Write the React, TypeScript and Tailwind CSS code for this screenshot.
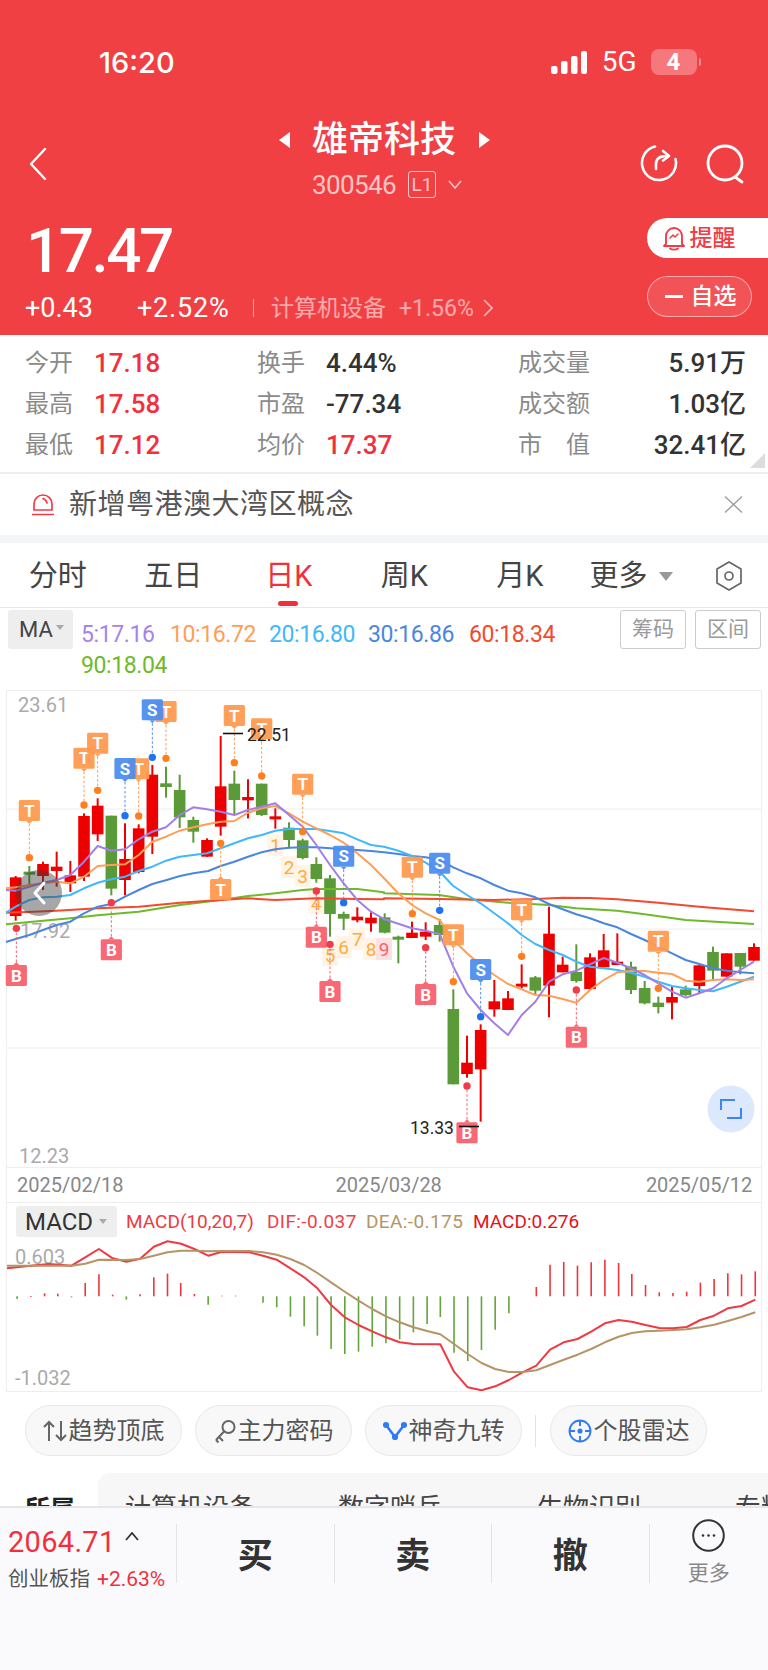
import React from "react";

type Pt = [number, number];
const z3 = (p: number[][]): Pt[] => p.map(([x, y]) => [x / 3, 680 + y / 3]);
const z4 = (p: number[][]): Pt[] => p.map(([x, y]) => [384 + x / 3, 780 + y / 3]);
const line = (p: Pt[]) => p.map(([x, y]) => `${x.toFixed(1)},${y.toFixed(1)}`).join(" ");

const RED = "#ee0000";
const GREEN = "#5a9a38";

// [cx, wickTop, wickBottom, bodyTop, bodyBottom, red?]
const candles3: number[][] = [
  [47, 588, 722, 592, 708, 1], [88, 558, 615, 575, 582, 0], [129, 545, 630, 552, 588, 1], [170, 515, 620, 560, 573, 1],
  [211, 543, 636, 586, 610, 1], [252, 400, 603, 408, 590, 1], [293, 355, 483, 377, 463, 1], [334, 407, 646, 407, 626, 0],
  [375, 430, 646, 537, 600, 1], [416, 433, 580, 445, 576, 1], [457, 255, 522, 284, 470, 1], [498, 260, 353, 310, 321, 0],
  [539, 284, 444, 330, 412, 0], [580, 410, 488, 420, 455, 0], [621, 475, 530, 480, 530, 1], [662, 168, 467, 319, 440, 1],
  [703, 272, 403, 311, 360, 0], [744, 298, 415, 351, 361, 1], [785, 311, 408, 311, 405, 0], [826, 385, 446, 409, 414, 1],
  [867, 427, 505, 443, 480, 0], [908, 476, 538, 481, 534, 0], [949, 532, 608, 552, 597, 0], [990, 585, 770, 595, 702, 0],
  [1031, 695, 750, 702, 716, 0], [1072, 682, 727, 710, 721, 1], [1113, 697, 755, 713, 730, 1],
];
const candles4: number[][] = [
  [2, 400, 460, 412, 458, 0], [43, 467, 550, 470, 478, 0], [84, 425, 474, 458, 474, 1], [125, 427, 480, 455, 470, 1],
  [167, 417, 485, 435, 465, 0], [208, 628, 913, 687, 913, 0], [249, 767, 893, 848, 882, 1], [290, 733, 1025, 750, 868, 1],
  [331, 600, 710, 664, 688, 1], [372, 633, 690, 655, 690, 1], [413, 553, 625, 611, 620, 1], [454, 588, 642, 592, 632, 0],
  [495, 380, 712, 461, 617, 1], [536, 530, 577, 554, 577, 1], [577, 493, 608, 576, 603, 0], [618, 520, 627, 532, 627, 1],
  [659, 462, 562, 511, 562, 1], [700, 460, 555, 545, 555, 1], [741, 545, 642, 560, 630, 0], [782, 603, 673, 624, 670, 0],
  [823, 650, 700, 668, 681, 0], [864, 620, 718, 651, 668, 1], [905, 617, 648, 628, 645, 0], [946, 556, 640, 556, 618, 1],
  [987, 500, 597, 516, 572, 0], [1028, 520, 590, 520, 590, 1], [1069, 519, 583, 519, 560, 0], [1110, 490, 542, 501, 542, 1],
];

const ma: { c: string; p: Pt[] }[] = [
  {
    c: "#6fb92a",
    p: [...z3([[18, 733], [129, 722], [211, 715], [293, 706], [416, 695], [540, 675], [662, 660], [744, 648], [826, 640], [908, 630], [949, 627], [1072, 627], [1152, 637]]),
      ...z4([[0, 340], [165, 345], [250, 358], [372, 368], [495, 375], [577, 385], [700, 392], [782, 403], [905, 420], [1110, 432]])],
  },
  {
    c: "#f5492e",
    p: [...z3([[18, 698], [100, 695], [170, 692], [293, 685], [416, 680], [540, 668], [662, 660], [744, 655], [826, 660], [949, 655], [1072, 657], [1152, 658]]),
      ...z4([[0, 355], [165, 357], [331, 360], [454, 357], [536, 353], [618, 354], [700, 358], [823, 368], [946, 380], [1110, 394]])],
  },
  {
    c: "#4a86e0",
    p: [...z3([[18, 786], [47, 777], [88, 765], [129, 750], [170, 735], [211, 725], [252, 700], [293, 680], [334, 672], [375, 650], [416, 630], [457, 612], [500, 600], [540, 588], [580, 580], [625, 573], [662, 558], [703, 545], [744, 530], [785, 517], [826, 508], [867, 503], [908, 502], [949, 502], [990, 505], [1031, 508], [1072, 510], [1113, 513], [1152, 517]]),
      ...z4([[0, 217], [43, 222], [84, 228], [125, 232], [167, 240], [208, 262], [249, 280], [290, 295], [331, 315], [372, 332], [413, 340], [454, 352], [495, 372], [536, 388], [577, 403], [618, 415], [659, 430], [700, 442], [741, 462], [782, 480], [823, 500], [864, 520], [905, 540], [946, 552], [987, 565], [1028, 572], [1069, 577], [1110, 580]])],
  },
  {
    c: "#40b8fc",
    p: [...z3([[18, 698], [47, 680], [88, 660], [129, 652], [170, 650], [211, 645], [252, 625], [293, 608], [334, 598], [375, 590], [416, 573], [457, 560], [498, 542], [539, 530], [580, 525], [621, 520], [662, 505], [703, 490], [744, 475], [785, 465], [826, 452], [867, 447], [908, 447], [949, 447], [990, 453], [1031, 460], [1072, 478], [1113, 495], [1152, 500]]),
      ...z4([[0, 200], [43, 212], [84, 228], [125, 248], [167, 275], [208, 318], [249, 345], [290, 370], [331, 400], [372, 430], [413, 465], [454, 492], [495, 510], [536, 525], [577, 545], [618, 560], [659, 565], [700, 570], [741, 578], [782, 590], [823, 605], [864, 618], [905, 625], [946, 630], [987, 634], [1028, 620], [1069, 605], [1110, 590]])],
  },
  {
    c: "#ff9e57",
    p: [...z3([[18, 625], [47, 622], [88, 615], [129, 610], [170, 605], [211, 610], [252, 590], [293, 558], [334, 555], [375, 553], [416, 525], [457, 485], [498, 470], [539, 452], [580, 442], [621, 433], [662, 425], [703, 423], [744, 398], [785, 385], [826, 378], [867, 400], [908, 425], [949, 445], [990, 465], [1031, 488], [1072, 520], [1113, 555], [1152, 595]]),
      ...z4([[43, 340], [84, 375], [125, 400], [167, 420], [208, 480], [249, 520], [290, 555], [331, 585], [372, 612], [413, 628], [454, 645], [495, 647], [536, 657], [577, 668], [618, 630], [659, 600], [700, 577], [741, 573], [782, 573], [823, 578], [864, 582], [905, 602], [946, 605], [987, 600], [1028, 598], [1069, 600], [1110, 598]])],
  },
  {
    c: "#a17fe8",
    p: [...z3([[18, 630], [47, 632], [88, 620], [129, 608], [170, 600], [211, 585], [252, 545], [293, 498], [334, 512], [375, 508], [416, 478], [457, 455], [498, 442], [539, 405], [580, 382], [621, 388], [662, 395], [703, 405], [744, 390], [785, 380], [826, 370], [867, 405], [908, 440], [949, 495], [990, 555], [1031, 610], [1072, 660], [1113, 695], [1152, 717]]),
      ...z4([[84, 445], [125, 452], [167, 462], [208, 560], [249, 640], [290, 690], [331, 730], [372, 765], [413, 705], [454, 665], [495, 605], [536, 583], [577, 572], [618, 553], [659, 534], [700, 548], [741, 565], [782, 585], [823, 610], [864, 635], [905, 653], [946, 640], [987, 625], [1028, 595], [1069, 570], [1110, 545]])],
  },
];

const COL: Record<string, string> = { T: "#ff9a50", S: "#4f8ff0", B: "#f9606e" };
const DOT: Record<string, string> = { T: "#ff7f1f", S: "#1f72f0", B: "#f23a48" };

// letter, cx, tagTop, dotY (all full-page pixels)
const t3 = (l: string, x: number, top: number, dot: number) => [l, x / 3, 680 + top / 3, 680 + dot / 3] as [string, number, number, number];
const t4 = (l: string, x: number, top: number, dot: number) => [l, 384 + x / 3, 780 + top / 3, 780 + dot / 3] as [string, number, number, number];

const markers = [
  t3("T", 88, 360, 533), t3("T", 252, 203, 375), t3("T", 293, 158, 331), t3("T", 416, 235, 408), t3("S", 375, 234, 407),
  t3("T", 498, 63, 235), t3("S", 457, 58, 232), t3("T", 703, 75, 248), t3("T", 785, 115, 288), t3("T", 908, 281, 455),
  t3("S", 1031, 497, 668), t3("T", 662, 597, 490),
  t3("B", 49, 855, 745), t3("B", 334, 778, 668), t3("B", 949, 740, 633), t3("B", 990, 903, 793),
  t4("T", 85, 230, 401), t4("S", 167, 218, 391), t4("T", 208, 433, 605), t4("S", 290, 537, 710), t4("T", 413, 358, 529),
  t4("T", 823, 452, 625), t4("B", 125, 612, 503), t4("B", 249, 1027, 918), t4("B", 577, 740, 630),
];

const nums: [string, number, number][] = [
  ["1", 826, 495], ["2", 867, 562], ["3", 908, 587], ["4", 949, 668], ["5", 990, 825], ["6", 1031, 802], ["7", 1072, 777], ["8", 1113, 807], ["9", 1152, 807],
];

function Candle({ c, conv }: { c: number[]; conv: (p: number[][]) => Pt[] }) {
  const [[x, wt], [, wb], [, bt], [, bb]] = conv([[c[0], c[1]], [c[0], c[2]], [c[0], c[3]], [c[0], c[4]]]);
  const col = c[5] ? RED : GREEN;
  return (
    <g>
      <rect x={x - 1} y={wt} width={2} height={wb - wt} fill={col} />
      <rect x={x - 5.8} y={bt} width={11.6} height={Math.max(bb - bt, 3)} fill={col} />
    </g>
  );
}

function Marker({ m }: { m: [string, number, number, number] }) {
  const [l, x, top, dot] = m;
  const down = dot > top;
  const h = 21;
  const c = COL[l];
  const tipY = down ? top + h + 3 : top - 3;
  return (
    <g>
      <line x1={x} x2={x} y1={tipY} y2={dot} stroke={c} strokeWidth={1} strokeDasharray="2.5 2" />
      <circle cx={x} cy={dot} r={3.7} fill={DOT[l]} />
      <g opacity={0.95}>
        <rect x={x - 10.6} y={top} width={21.2} height={h} rx={1.5} fill={c} />
        <polygon points={down ? `${x - 3},${top + h} ${x + 3},${top + h} ${x},${tipY}` : `${x - 3},${top} ${x + 3},${top} ${x},${tipY}`} fill={c} />
        <text x={x} y={top + 16.5} textAnchor="middle" fontSize={17} fontWeight={700} fill="#fff">{l}</text>
      </g>
    </g>
  );
}

function KChart() {
  return (
    <svg width={768} height={488} viewBox="0 680 768 488" className="block shrink-0">
      <rect x={6.5} y={690.5} width={755} height={477} fill="#fff" stroke="#eeeeee" />
      {[809, 929, 1048].map((y) => (
        <line key={y} x1={7} x2={761} y1={y} y2={y} stroke="#eeeeee" />
      ))}
      <text x={18} y={712} fontSize={20} fill="#aaaaaa">23.61</text>
      <text x={20} y={938} fontSize={20} fill="#aaaaaa">17.92</text>
      <text x={19} y={1163} fontSize={20} fill="#aaaaaa">12.23</text>
      {nums.map(([n, x, y]) => {
        const cx = x / 3;
        const cy = 680 + y / 3;
        const nine = n === "9";
        return (
          <g key={n}>
            <rect x={cx - 8} y={cy - 11} width={16} height={22} fill={nine ? "#fde0e0" : "#fff4e6"} />
            <text x={cx} y={cy + 7} textAnchor="middle" fontSize={19} fill={nine ? "#f9606e" : "#ffab40"}>{n}</text>
          </g>
        );
      })}
      {candles3.map((c) => <Candle key={c[0]} c={c} conv={z3} />)}
      {candles4.map((c) => <Candle key={c[0]} c={c} conv={z4} />)}
      {ma.map((m) => (
        <polyline key={m.c} points={line(m.p)} fill="none" stroke={m.c} strokeWidth={2} strokeLinejoin="round" />
      ))}
      {markers.map((m, i) => <Marker key={i} m={m} />)}
      <line x1={223} x2={243} y1={733.5} y2={733.5} stroke="#111" strokeWidth={1.6} />
      <text x={247} y={741} fontSize={17.5} fill="#222">22.51</text>
      <line x1={459} x2={479} y1={1126.5} y2={1126.5} stroke="#111" strokeWidth={1.6} />
      <text x={410} y={1134} fontSize={17.5} fill="#222">13.33</text>
      <circle cx={39} cy={893} r={23} fill="#3c3c3c" fillOpacity={0.45} />
      <polyline points="44,883 35,893 44,903" fill="none" stroke="#fff" strokeWidth={3} strokeLinecap="round" strokeLinejoin="round" />
      <circle cx={731} cy={1109} r={23.5} fill="#dce8fb" />
      <polyline points="721,1110 721,1100 735,1100" fill="none" stroke="#3f86f5" strokeWidth={2} />
      <polyline points="727,1118 741,1118 741,1108" fill="none" stroke="#3f86f5" strokeWidth={2} />
    </svg>
  );
}

const bars: [number, number, number][] = [
  [35, 420, 0], [63, 414, 1], [91, 403, 1], [118, 404, 1], [146, 415, 0], [174, 372, 1], [202, 346, 1], [230, 407, 1], [258, 422, 0], [286, 406, 1],
  [314, 355, 1], [342, 344, 1], [369, 372, 1], [397, 405, 1], [425, 437, 0], [453, 410, 1], [481, 410, 1], [537, 431, 0], [565, 445, 0], [593, 473, 0],
  [621, 502, 0], [648, 530, 0], [676, 570, 0], [704, 585, 0], [732, 578, 0], [760, 563, 0], [788, 553, 0], [816, 541, 0], [844, 520, 0], [872, 495, 0],
  [899, 474, 0], [927, 581, 0], [955, 606, 0], [983, 573, 0], [1011, 512, 0], [1039, 463, 0], [1095, 384, 1], [1123, 317, 1], [1151, 309, 1], [1179, 320, 1],
  [1207, 310, 1], [1235, 302, 1], [1263, 312, 1], [1290, 345, 1], [1318, 378, 1], [1346, 400, 1], [1374, 402, 1], [1402, 398, 1], [1430, 371, 1], [1458, 360, 1],
  [1486, 343, 1], [1514, 346, 1], [1542, 337, 1],
];
const difP = [[12, 328], [63, 320], [100, 315], [146, 320], [174, 295], [202, 270], [230, 298], [258, 308], [286, 299], [314, 263], [342, 247], [370, 254], [397, 270], [425, 290], [453, 278], [509, 280], [537, 290], [565, 302], [593, 328], [621, 355], [648, 388], [676, 438], [704, 475], [732, 498], [760, 517], [788, 535], [816, 550], [844, 555], [899, 556], [927, 638], [955, 685], [983, 694], [1011, 682], [1039, 663], [1067, 640], [1095, 620], [1123, 572], [1151, 550], [1179, 540], [1207, 518], [1235, 493], [1263, 483], [1290, 488], [1318, 498], [1346, 507], [1374, 508], [1402, 504], [1430, 483], [1458, 470], [1486, 448], [1514, 441], [1542, 422]];
const deaP = [[12, 320], [146, 320], [174, 314], [202, 302], [258, 303], [286, 300], [314, 290], [342, 280], [370, 275], [397, 275], [425, 277], [453, 276], [509, 276], [537, 280], [565, 287], [593, 300], [621, 318], [648, 342], [676, 370], [704, 398], [732, 425], [760, 450], [788, 472], [816, 490], [844, 505], [872, 516], [899, 526], [927, 555], [955, 585], [983, 612], [1011, 630], [1039, 639], [1067, 639], [1095, 634], [1123, 618], [1151, 602], [1179, 587], [1207, 570], [1235, 550], [1263, 533], [1290, 522], [1318, 517], [1346, 515], [1374, 513], [1402, 511], [1430, 505], [1458, 497], [1486, 486], [1514, 474], [1542, 460]];
const zm = (p: number[][]): Pt[] => p.map(([x, y]) => [x / 2.0417, 1160 + y / 3]);

function MacdChart() {
  return (
    <svg width={754} height={152} viewBox="7 1240 754 152" className="block">
      <text x={15} y={1265} fontSize={20} fill="#aaaaaa">0.603</text>
      <text x={15} y={1386} fontSize={20} fill="#aaaaaa">-1.032</text>
      {bars.map(([x, y, r]) => {
        const fx = x / 2.0417;
        return <line key={x} x1={fx} x2={fx} y1={1160 + 412 / 3} y2={1160 + y / 3} stroke={r ? "#f0323c" : "#63a43c"} strokeWidth={1.6} />;
      })}
      <polyline points={line(zm(difP))} fill="none" stroke="#ee3a42" strokeWidth={2} strokeLinejoin="round" />
      <polyline points={line(zm(deaP))} fill="none" stroke="#b59565" strokeWidth={2} strokeLinejoin="round" />
    </svg>
  );
}

const Chip = ({ icon, label }: { icon: React.ReactNode; label: string }) => (
  <div className="flex h-[51px] w-[157px] items-center justify-center rounded-[26px] border border-[#e8e8e8] bg-[#f8f8f8] text-[24px] leading-none text-[#555555]">
    {icon}
    {label}
  </div>
);

const Stat = ({ label, value, w, red, right }: { label: string; value: string; w: number; red?: boolean; right?: boolean }) => (
  <div className="flex items-center" style={{ width: w }}>
    <span className="text-[24px] leading-none text-[#8a8a8a]">{label}</span>
    <span className={`text-[26px] font-medium leading-none ${red ? "text-[#f2303c]" : "text-[#333333]"} ${right ? "ml-auto" : "ml-[21px]"}`}>{value}</span>
  </div>
);

export default function App() {
  return (
    <div className="relative flex h-[1670px] w-[768px] flex-col overflow-hidden bg-white font-['Roboto','Noto_Sans_CJK_SC',sans-serif]">
      {/* Header */}
      <div className="flex h-[335px] shrink-0 flex-col bg-[#f14044] text-white">
        <div className="mt-[47px] flex h-[30px] items-center">
          <span className="ml-[99px] font-['Inter','Roboto',sans-serif] text-[29px] font-medium leading-none">16:20</span>
          <svg className="ml-[376px]" width={36} height={23} viewBox="0 0 36 23" fill="#fff">
            <rect x={0} y={15} width={6.5} height={8} rx={2} />
            <rect x={10} y={10} width={6.5} height={13} rx={2} />
            <rect x={20} y={5} width={6.5} height={18} rx={2} />
            <rect x={30} y={0} width={6} height={23} rx={2} />
          </svg>
          <span className="ml-[15px] text-[28px] leading-none">5G</span>
          <div className="ml-[14px] flex h-[26px] w-[46px] items-center justify-center rounded-[8px] bg-white/30 text-[24px] font-bold leading-none">4</div>
          <div className="ml-[2px] h-[8px] w-[2px] rounded-r bg-white/40" />
        </div>

        <div className="mt-[45px] flex h-[76px]">
          <div className="w-[279px] pl-[29px] pt-[26px]">
            <svg width={18} height={32} viewBox="0 0 18 32" fill="none" stroke="#fff" strokeWidth={2.4} strokeLinecap="round" strokeLinejoin="round">
              <polyline points="16,1 2,16 16,31" />
            </svg>
          </div>
          <div className="w-[211px]">
            <div className="flex h-[36px] items-center">
              <div className="h-0 w-0 border-y-[8px] border-r-[11px] border-y-transparent border-r-white" />
              <span className="ml-[22px] w-[146px] text-[36px] font-medium leading-none">雄帝科技</span>
              <div className="ml-[21px] h-0 w-0 border-y-[8px] border-l-[11px] border-y-transparent border-l-white" />
            </div>
            <div className="mt-[13px] flex items-center pl-[33px] text-white/70">
              <span className="w-[85px] text-[26px] tracking-[-0.6px] leading-none">300546</span>
              <span className="ml-[11px] flex h-[27px] w-[28px] items-center justify-center rounded-[3px] border border-white/70 text-[19px] leading-none">L1</span>
              <svg className="ml-[12px]" width={14} height={9} viewBox="0 0 14 9" fill="none" stroke="currentColor" strokeWidth={1.6}>
                <polyline points="1,1 7,8 13,1" />
              </svg>
            </div>
          </div>
          <div className="ml-[150px] mt-[22px] flex">
            <svg width={38} height={38} viewBox="0 0 38 38" fill="none" stroke="#fff" strokeWidth={2.6} strokeLinecap="round" strokeLinejoin="round">
              <path d="M15 2.5 A17 17 0 1 0 35.5 15" />
              <path d="M16 25 V20 C16 14 20 12 27 12" />
              <polyline points="23,7 29,12 23,16.5" />
            </svg>
            <svg className="ml-[28px]" width={40} height={40} viewBox="0 0 40 40" fill="none" stroke="#fff" strokeWidth={2.8} strokeLinecap="round">
              <circle cx={19} cy={19} r={17} />
              <line x1={29} y1={33} x2={36} y2={38} />
            </svg>
          </div>
        </div>

        <div className="mt-[20px] flex h-[99px] items-start justify-between">
          <div className="pl-[25px]">
            <div className="ml-[1px] mt-[5px] h-[64px] text-[62px] font-medium tracking-[-2.5px] leading-[56px]">17.47</div>
            <div className="mt-[8px] flex h-[26px] items-center">
              <span className="w-[112px] text-[27px] leading-none">+0.43</span>
              <span className="w-[116px] text-[27px] tracking-[0.8px] leading-none">+2.52%</span>
              <span className="h-[18px] w-px bg-white/50" />
              <span className="ml-[17px] text-[23px] leading-none text-white/55">计算机设备</span>
              <span className="ml-[13px] text-[23px] leading-none text-white/55">+1.56%</span>
              <svg className="ml-[9px]" width={10} height={18} viewBox="0 0 10 18" fill="none" stroke="#ffffff" strokeOpacity={0.6} strokeWidth={1.6}>
                <polyline points="1,1 9,9 1,17" />
              </svg>
            </div>
          </div>
          <div className="flex w-[121.5px] flex-col">
            <div className="flex h-[40px] items-center rounded-l-[20px] bg-white pl-[16px] text-[#f13c48]">
              <svg width={22} height={26} viewBox="0 0 22 26" fill="none" stroke="currentColor" strokeWidth={1.9} strokeLinejoin="round" strokeLinecap="round">
                <path d="M3 19 V11 A8 8 0 0 1 19 11 V19 L21 21 H1 Z" />
                <path d="M7 23.5 C9 25 13 25 15 23.5" />
                <polyline points="7,13 10,10 12,12 15,9" strokeWidth={1.5} />
              </svg>
              <span className="ml-[5px] text-[23px] font-medium leading-none">提醒</span>
            </div>
            <div className="mt-[18px] flex h-[41px] w-[105px] items-center rounded-[21px] border border-white/50 bg-white/10 pl-[17px]">
              <span className="h-[3px] w-[18px] bg-white" />
              <span className="ml-[8px] text-[23px] font-medium leading-none">自选</span>
            </div>
          </div>
        </div>
      </div>

      {/* Stats */}
      <div className="relative h-[139px] shrink-0 border-b-2 border-[#eeeeee] pl-[25px] pt-[7px]">
        {[
          [["今开", "17.18", 1], ["换手", "4.44%", 0], ["成交量", "5.91万", 0]],
          [["最高", "17.58", 1], ["市盈", "-77.34", 0], ["成交额", "1.03亿", 0]],
          [["最低", "17.12", 1], ["均价", "17.37", 1], ["市　值", "32.41亿", 0]],
        ].map((row, i) => (
          <div key={i} className="flex h-[41px] items-center">
            <Stat w={232} label={row[0][0] as string} value={row[0][1] as string} red={!!row[0][2]} />
            <Stat w={261} label={row[1][0] as string} value={row[1][1] as string} red={!!row[1][2]} />
            <Stat w={228} right label={row[2][0] as string} value={row[2][1] as string} />
          </div>
        ))}
        <div className="absolute bottom-[4px] right-[3px] h-0 w-0 border-b-[15px] border-l-[15px] border-b-[#dddddd] border-l-transparent" />
      </div>

      {/* Notice */}
      <div className="flex h-[61px] shrink-0 items-center pl-[32px]">
        <svg width={22} height={23} viewBox="0 0 22 23" fill="none" stroke="#f23a48" strokeWidth={1.7} strokeLinecap="round">
          <path d="M2 17 V11 A9 9 0 0 1 20 11 V17 Z" />
          <path d="M11 5.5 A6 6 0 0 1 15 10" />
          <line x1={0.5} x2={21.5} y1={21.5} y2={21.5} />
        </svg>
        <span className="ml-[15px] w-[285px] text-[28px] leading-none tracking-[0.5px] whitespace-nowrap text-[#555555]">新增粤港澳大湾区概念</span>
        <svg className="ml-[370px]" width={19} height={17} viewBox="0 0 19 17" fill="none" stroke="#9a9a9a" strokeWidth={1.3}>
          <line x1={1} y1={0.5} x2={18} y2={16.5} />
          <line x1={18} y1={0.5} x2={1} y2={16.5} />
        </svg>
      </div>
      <div className="h-[8px] shrink-0 bg-[#f4f5f7]" />

      {/* Tabs */}
      <div className="flex h-[65px] shrink-0 items-center border-b border-[#e8e8e8] pt-[2px] text-[29px] leading-none text-[#444444]">
        <span className="w-[115.5px] text-center">分时</span>
        <span className="w-[115.5px] text-center">五日</span>
        <span className="relative w-[115.5px] text-center text-[#f2303c]">
          日K
          <span className="absolute left-[47px] top-[39px] h-[5px] w-[20px] rounded-full bg-[#f2303c]" />
        </span>
        <span className="w-[115.5px] text-center">周K</span>
        <span className="w-[115.5px] text-center">月K</span>
        <span className="ml-[12px]">更多</span>
        <div className="ml-[11px] h-0 w-0 border-x-[7px] border-t-[9px] border-x-transparent border-t-[#999999]" />
        <svg className="ml-[43px]" width={26} height={30} viewBox="0 0 26 30" fill="none" stroke="#666666" strokeWidth={1.7}>
          <polygon points="13,1 25,8 25,22 13,29 1,22 1,8" strokeLinejoin="round" />
          <circle cx={13} cy={15} r={4} />
        </svg>
      </div>

      {/* MA row */}
      <div className="flex h-[72px] shrink-0 items-start">
        <div className="ml-[8px] mt-[2px] flex h-[39px] w-[65px] items-center rounded-[3px] bg-[#eeeeee] pl-[11px] text-[22px] leading-none text-[#444444]">
          MA
          <div className="ml-[3px] mb-[4px] h-0 w-0 border-x-[4px] border-t-[5px] border-x-transparent border-t-[#aaaaaa]" />
        </div>
        <div className="ml-[8px] mt-[11px] w-[490px] text-[23px] tracking-[-0.4px] leading-[31px]">
          <div className="flex">
            <span className="w-[89px] text-[#a584ec]">5:17.16</span>
            <span className="w-[99px] text-[#ff9e57]">10:16.72</span>
            <span className="w-[99px] text-[#40b8fc]">20:16.80</span>
            <span className="w-[101px] text-[#4a86e0]">30:16.86</span>
            <span className="text-[#f5492e]">60:18.34</span>
          </div>
          <div className="text-[#6fb92a]">90:18.04</div>
        </div>
        <div className="ml-auto mr-[7px] mt-[2px] flex gap-[9px] text-[21px] leading-none text-[#9a9a9a]">
          <span className="flex h-[39px] w-[66px] items-center justify-center rounded-[3px] border border-[#cccccc]">筹码</span>
          <span className="flex h-[39px] w-[66px] items-center justify-center rounded-[3px] border border-[#cccccc]">区间</span>
        </div>
      </div>

      {/* Candles */}
      <KChart />

      {/* Dates + MACD */}
      <div className="ml-[6px] w-[756px] shrink-0 border-x border-b border-[#eeeeee]">
        <div className="flex h-[35px] items-center border-b border-[#eeeeee] text-[20px] leading-none text-[#888888]">
          <span className="ml-[10px]">2025/02/18</span>
          <span className="ml-[212px]">2025/03/28</span>
          <span className="ml-[204px]">2025/05/12</span>
        </div>
        <div className="flex h-[36px] items-start pt-[3px]">
          <div className="ml-[9px] flex h-[31px] w-[101px] items-center rounded-[3px] bg-[#eeeeee] pl-[9px] text-[24px] leading-none text-[#333333]">
            MACD
            <div className="ml-[6px] h-0 w-0 border-x-[4px] border-t-[5px] border-x-transparent border-t-[#aaaaaa]" />
          </div>
          <div className="ml-[9px] flex h-[31px] items-center text-[19px] leading-none">
            <span className="w-[141px] text-[#ee3a42]">MACD(10,20,7)</span>
            <span className="w-[99px] tracking-[0.4px] text-[#f0404a]">DIF:-0.037</span>
            <span className="w-[107px] tracking-[0.4px] text-[#b59565]">DEA:-0.175</span>
            <span className="text-[#e8101a]">MACD:0.276</span>
          </div>
        </div>
        <MacdChart />
      </div>

      {/* Chips */}
      <div className="mt-[13px] flex shrink-0 items-center pl-[25px]">
        <Chip
          label="趋势顶底"
          icon={
            <svg className="mr-[2px]" width={24} height={22} viewBox="0 0 24 22" fill="none" stroke="#666666" strokeWidth={2}>
              <path d="M6 21 V2 M1 7 L6 2 L11 7" />
              <path d="M18 1 V20 M13 15 L18 20 L23 15" />
            </svg>
          }
        />
        <div className="w-[13px]" />
        <Chip
          label="主力密码"
          icon={
            <svg className="mr-[2px]" width={22} height={24} viewBox="0 0 22 24" fill="none" stroke="#666666" strokeWidth={2}>
              <circle cx={14.5} cy={8} r={6} />
              <path d="M10 12.5 L2 21 M5 18 L9 22 M2 21 L4.5 23.5" />
            </svg>
          }
        />
        <div className="w-[13px]" />
        <Chip
          label="神奇九转"
          icon={
            <svg className="mr-[2px]" width={24} height={22} viewBox="0 0 24 22" fill="#2f7bf5" stroke="#2f7bf5" strokeWidth={2.6} strokeLinejoin="round">
              <polyline points="3,5 12,17 21,5" fill="none" />
              <circle cx={3} cy={5} r={1.8} />
              <circle cx={12} cy={17} r={1.8} />
              <circle cx={21} cy={5} r={1.8} />
            </svg>
          }
        />
        <div className="ml-[13px] h-[32px] w-px bg-[#e3e3e3]" />
        <div className="w-[14px]" />
        <Chip
          label="个股雷达"
          icon={
            <svg className="mr-[2px]" width={24} height={24} viewBox="0 0 24 24" fill="none" stroke="#2f7bf5" strokeWidth={1.9}>
              <circle cx={12} cy={12} r={10.5} />
              <path d="M12 1 V7 M12 17 V23 M1 12 H7 M17 12 H23" />
              <circle cx={12} cy={12} r={1.6} fill="#2f7bf5" />
            </svg>
          }
        />
      </div>

      {/* Section clipped by the footer */}
      <div className="mt-[17px] flex h-[33px] shrink-0 overflow-hidden">
        <div className="w-[98px] shrink-0 pl-[25px] pt-[24px] text-[25px] font-bold leading-none text-[#222222]">所属</div>
        <div className="flex h-[60px] min-w-0 flex-1 overflow-hidden rounded-tl-[12px] bg-[#f7f7f7] pt-[22px] text-[26px] leading-none text-[#444444]">
          <span className="ml-[27px] w-[132px] shrink-0 whitespace-nowrap">计算机设备</span>
          <span className="ml-[81px] w-[106px] shrink-0 whitespace-nowrap">数字哨兵</span>
          <span className="ml-[93px] w-[106px] shrink-0 whitespace-nowrap">生物识别</span>
          <span className="ml-[92px] shrink-0 whitespace-nowrap">专精特新</span>
        </div>
      </div>

      {/* Footer */}
      <div className="flex flex-1 items-start border-t-2 border-[#e6e6e8] bg-[#fafafc] pt-[16px]">
        <div className="h-[66px] w-[176px] pl-[8px] pt-[3px]">
          <div className="flex items-start">
            <span className="text-[29px] tracking-[0.3px] leading-[30px] text-[#f2303c]">2064.71</span>
            <svg className="ml-[9px] mt-[5px]" width={14} height={9} viewBox="0 0 14 9" fill="none" stroke="#333333" strokeWidth={1.8}>
              <polyline points="1,8 7,1 13,8" />
            </svg>
          </div>
          <div className="mt-[12px] flex items-center whitespace-nowrap">
            <span className="text-[20.5px] leading-none text-[#555555]">创业板指</span>
            <span className="ml-[7px] text-[21px] leading-none text-[#f2303c]">+2.63%</span>
          </div>
        </div>
        {["买", "卖", "撤"].map((t) => (
          <div key={t} className="flex h-[59px] w-[157.5px] items-center justify-center border-l border-[#e3e3e3] pt-[5px] text-[35px] font-bold leading-none text-[#333333]">
            {t}
          </div>
        ))}
        <div className="h-[59px] flex-1 border-l border-[#e3e3e3]">
          <div className="-mt-[5px] flex flex-col items-center">
            <svg width={33} height={33} viewBox="0 0 33 33" fill="#333333">
              <circle cx={16.5} cy={16.5} r={15.3} fill="none" stroke="#333333" strokeWidth={2} />
              <circle cx={11} cy={16.5} r={1.3} />
              <circle cx={16.5} cy={16.5} r={1.3} />
              <circle cx={22} cy={16.5} r={1.3} />
            </svg>
            <span className="mt-[11px] text-[21px] leading-none text-[#888888]">更多</span>
          </div>
        </div>
      </div>
    </div>
  );
}
